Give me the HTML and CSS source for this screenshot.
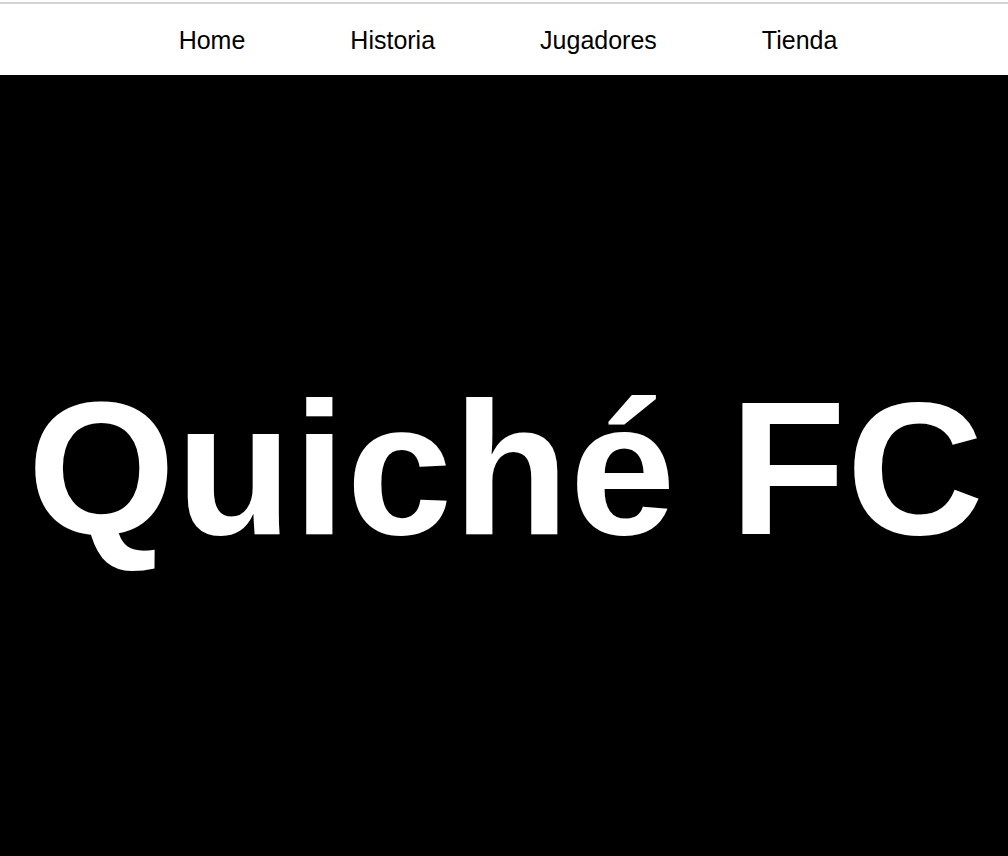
FILE: index.html
```html
<!DOCTYPE html>
<html lang="es">
<head>
<meta charset="utf-8">
<title>Quiché FC</title>
<link rel="stylesheet" href="styles.css">
</head>
<body>
<div class="topline"></div>
<nav class="nav">
  <a class="nav-link" href="#">Home</a>
  <a class="nav-link" href="#">Historia</a>
  <a class="nav-link" href="#">Jugadores</a>
  <a class="nav-link" href="#">Tienda</a>
</nav>
<section class="hero">
  <h1 class="hero-title">Quiché FC</h1>
</section>
</body>
</html>
```

FILE: styles.css
```css
html, body {
  margin: 0;
  padding: 0;
  background: #fff;
  font-family: "Liberation Sans", Arial, sans-serif;
}
.topline {
  margin-top: 2px;
  height: 2px;
  background: #d3d3d3;
}
.nav {
  height: 71px;
  display: flex;
  align-items: center;
  justify-content: center;
  gap: 105px;
  padding-left: 8px;
  padding-top: 1px;
  box-sizing: border-box;
}
.nav-link {
  color: #000;
  text-decoration: none;
  font-size: 25px;
}
.hero {
  background: #000;
  height: 781px;
  box-sizing: border-box;
  padding-top: 4px;
  padding-left: 4px;
  display: flex;
  align-items: center;
  justify-content: center;
}
.hero-title {
  margin: 0;
  color: #fff;
  font-size: 190px;
  font-weight: bold;
  letter-spacing: 0.75px;
  white-space: nowrap;
}
```
